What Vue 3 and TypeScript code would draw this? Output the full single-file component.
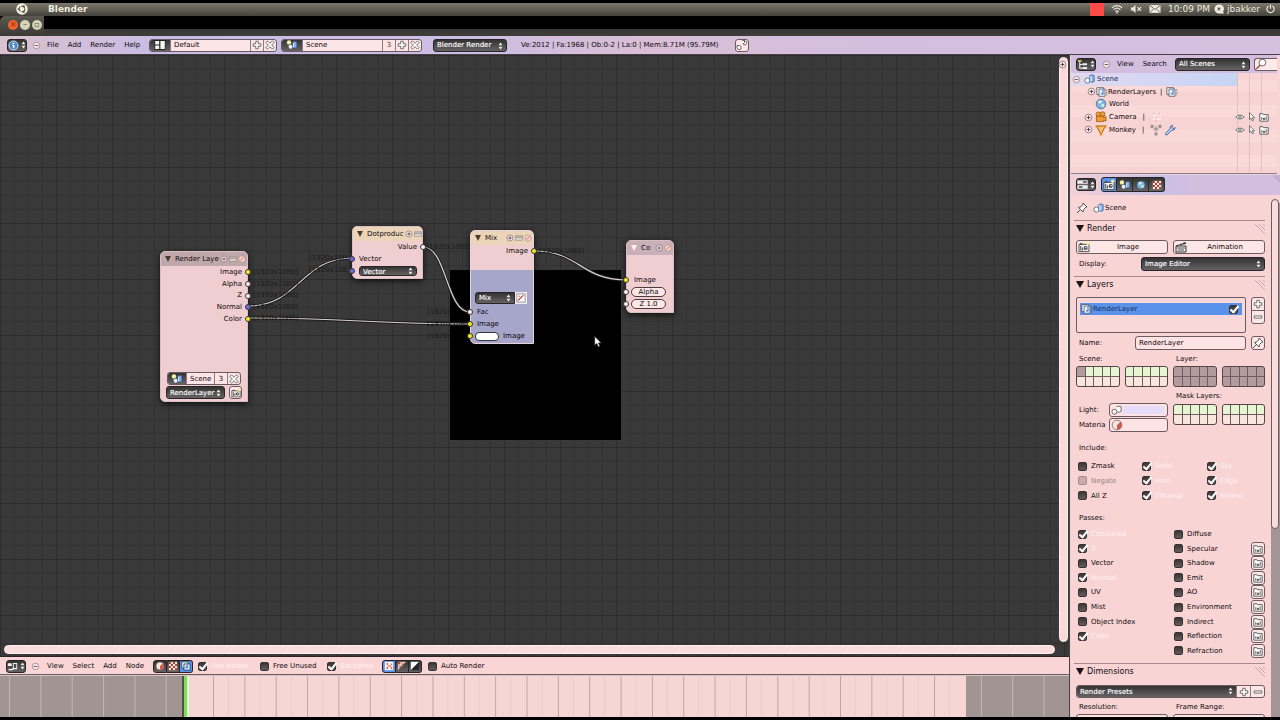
<script setup lang="ts">
import { ref } from 'vue'

interface Row { label: string; on: boolean; dim?: boolean; render?: boolean }

const fileMenus = ['File', 'Add', 'Render', 'Help']
const nodeMenus = ['View', 'Select', 'Add', 'Node']

const layoutName = ref('Default')
const sceneName = ref('Scene')
const layerName = ref('RenderLayer')
const search = ref('')

const outputs = [
  { label: 'Image', color: 'yellow' },
  { label: 'Alpha', color: 'white' },
  { label: 'Z', color: 'white' },
  { label: 'Normal', color: 'blue' },
  { label: 'Color', color: 'yellow' },
]

const place = (x: number, y: number) => ({ left: `${x}px`, top: `${y}px` })

const sizeTags = [
  { x: 253, y: 213, t: '[1920x1080]' },
  { x: 253, y: 225, t: '[1920x1080]' },
  { x: 253, y: 236, t: '[1920x1080]' },
  { x: 253, y: 248, t: '[1920x1080]' },
  { x: 253, y: 259, t: '[1920x1080]' },
  { x: 309, y: 199, t: '[1920x108' },
  { x: 309, y: 211, t: '[1920x108' },
  { x: 426, y: 188, t: '[1920x1080' },
  { x: 427, y: 253, t: '[1920x' },
  { x: 427, y: 265, t: '[1920x108' },
  { x: 427, y: 277, t: '[1920x' },
  { x: 539, y: 192, t: '[1920x1080]' },
]

const tree = [
  { icon: 'layers', label: 'RenderLayers', extra: ['layers'], open: true, pick: false, deep: true },
  { icon: 'world', label: 'World', extra: [], open: false, pick: false, deep: false },
  { icon: 'camobj', label: 'Camera', extra: ['dots'], open: true, pick: true, deep: false },
  { icon: 'mesh', label: 'Monkey', extra: ['verts', 'wrench'], open: true, pick: true, deep: false },
]

const include = ref<Row[]>([
  { label: 'Zmask', on: false }, { label: 'Solid', on: true }, { label: 'Sky', on: true },
  { label: 'Negate', on: false, dim: true }, { label: 'Halo', on: true }, { label: 'Edge', on: true },
  { label: 'All Z', on: false }, { label: 'ZTransp', on: true }, { label: 'Strand', on: true },
])
const passes = ref<Row[]>([
  { label: 'Combined', on: true }, { label: 'Z', on: true }, { label: 'Vector', on: false },
  { label: 'Normal', on: true }, { label: 'UV', on: false }, { label: 'Mist', on: false },
  { label: 'Object Index', on: false }, { label: 'Color', on: true },
])
const passesRight = ref<Row[]>([
  { label: 'Diffuse', on: false }, { label: 'Specular', on: false, render: true },
  { label: 'Shadow', on: false, render: true }, { label: 'Emit', on: false, render: true },
  { label: 'AO', on: false, render: true }, { label: 'Environment', on: false, render: true },
  { label: 'Indirect', on: false, render: true }, { label: 'Reflection', on: false, render: true },
  { label: 'Refraction', on: false, render: true },
])
const nodeChecks = ref({ use: true, free: false, backdrop: true, auto: false })

const ticks = Array.from({ length: 34 }, (_, i) => 9.5 + i * 31.35)
const halfTicks = Array.from({ length: 24 }, (_, i) => 213.5 + i * 31.35)
</script>

<template>
  <div class="app">
    <svg class="defs" aria-hidden="true">
      <symbol id="i-arrows" viewBox="0 0 6 10"><path d="M3 0.5 5.4 4H.6zM3 9.5 5.4 6H.6z" fill="#f2f2f2" /></symbol>
      <symbol id="i-plus" viewBox="0 0 12 12"><path d="M4.5 1.5h3v3h3v3h-3v3h-3v-3h-3v-3h3z" fill="#fff" stroke="#555" stroke-width="1" /></symbol>
      <symbol id="i-minus" viewBox="0 0 12 12"><path d="M1.5 4.7h9v2.6h-9z" fill="#fff" stroke="#555" stroke-width="1" /></symbol>
      <symbol id="i-x" viewBox="0 0 12 12"><path d="M3 1 6 4l3-3 2 2-3 3 3 3-2 2-3-3-3 3-2-2 3-3-3-3z" fill="#fff" stroke="#555" stroke-width="1" /></symbol>
      <symbol id="i-collapse" viewBox="0 0 10 10"><circle cx="5" cy="5" r="3.6" fill="#fbe4e8" stroke="#96848d" stroke-width=".9" /><path d="M3 5h4" stroke="#555" /></symbol>
      <symbol id="i-expand" viewBox="0 0 10 10"><circle cx="5" cy="5" r="3.8" fill="#fbe4e8" stroke="#87767a" stroke-width=".9" /><path d="M3 5h4M5 3v4" stroke="#443c3e" stroke-width="1" /></symbol>
      <symbol id="i-info" viewBox="0 0 12 12"><circle cx="6" cy="6" r="5" fill="#4f86c8" stroke="#d9e6f5" stroke-width="1" /><path d="M5 3h2v1.4H5zM4.6 5.3H7V9H5.3V6.4h-.7z" fill="#fff" /></symbol>
      <symbol id="i-layout" viewBox="0 0 12 12"><path d="M.5 1h11v10H.5z" fill="#222" /><path d="M1.2 2h4v3.5h-4zM1.2 6.5h4V10h-4zM6.4 2h4.4v8H6.4z" fill="#f7f7f2" /></symbol>
      <symbol id="i-scene" viewBox="0 0 14 12"><circle cx="3.5" cy="3" r="2.6" fill="#f5f3a8" /><circle cx="5.4" cy="8" r="2.9" fill="#e4ecf2" stroke="#333" stroke-width=".7" /><path d="M8 2.6q2.4-1.4 4.6 0v6.2q-2.2 1.6-4.6 0z" fill="#7fb0ee" stroke="#35578c" stroke-width=".8" /><path d="M8.8 3.5v5.2" stroke="#e8f4ff" /></symbol>
      <symbol id="i-scenelt" viewBox="0 0 14 12"><circle cx="4" cy="7.8" r="3" fill="#fff" stroke="#456" stroke-width=".9" /><path d="M6.8 2q2.6-1.4 5 0v7q-2.4 1.7-5 0z" fill="#8bb8ee" stroke="#3c5f94" stroke-width=".9" /><path d="M8 2.8v6" stroke="#eef7ff" stroke-width="1.2" /></symbol>
      <symbol id="i-lamp" viewBox="0 0 14 12"><circle cx="4" cy="8" r="2.9" fill="#fff" stroke="#444" stroke-width=".9" /><path d="M6.4 2.2q2.8-1.2 5.4 0v5.4q-1.6 1.6-4.6.6" fill="#fff" stroke="#444" stroke-width=".9" /></symbol>
      <symbol id="i-full" viewBox="0 0 12 12"><path d="M6.200 1.500h2.300v2L7 5M8.500 1.500 11 3.500 9.500 6 7 5M1 6.500h2.500L5 7.500v2.500l-2 1L1 9z" fill="#fff" stroke="#444" stroke-width=".8" /></symbol>
      <symbol id="i-tree" viewBox="0 0 12 12"><path d="M3 2v8h3M3 6h3" fill="none" stroke="#fff" stroke-width="1" /><path d="M1 1h4v2H1z" fill="#c9bd6a" /><path d="M6 4.7h5v2.2H6zM6 8.7h5v2.2H6z" fill="#eee" /></symbol>
      <symbol id="i-props" viewBox="0 0 12 12"><path d="M.5 1.5h11v3.6H.5zM.5 6.9h11v3.6H.5z" fill="#f1eeee" stroke="#ddd" stroke-width=".6" /><path d="M6.5 2.5h4v1.6h-4zM2 8h4v1.5H2z" fill="#444" /></symbol>
      <symbol id="i-nodes" viewBox="0 0 14 12"><path d="M1 2h5v3.500H1zM7.500 1.500h5.500V9.500H7.500z" fill="#f1f1f1" /><path d="M2 10h4.500q1.500 0 1.500-2" fill="none" stroke="#fff" stroke-width="1.4" /><path d="M8.600 2.800h3.200v5H8.600z" fill="#4a4a4a" /></symbol>
      <symbol id="i-camera" viewBox="0 0 12 12"><path d="M1 3.4h10v7.200H1z" fill="#f8f4f4" stroke="#444" stroke-width=".9" /><path d="M2 2.200h2.500v1.400H2z" fill="#444" /><path d="M2.800 5v4.600M4.600 6.500v3.100" stroke="#444" stroke-width="1" /><circle cx="7.700" cy="7" r="2" fill="#444" /><circle cx="8" cy="6.800" r=".8" fill="#fff" /><circle cx="9.700" cy="2.200" r="1.700" fill="#f5ee92" /></symbol>
      <symbol id="i-result" viewBox="0 0 12 12"><path d="M1 2h3.500l.8 1.200H11v7.800H1z" fill="#fff" stroke="#444" stroke-width="1" /><path d="M3.400 9.400V6.200M5.400 9.400V7.400h1.2v2M8.600 9.400V5.200" fill="none" stroke="#444" stroke-width="1.1" /></symbol>
      <symbol id="i-clap" viewBox="0 0 12 12"><path d="M1 5h10v6H1z" fill="#eee" stroke="#222" stroke-width=".9" /><path d="M1 4.5 10.4 1l.7 1.8L1.6 5.6z" fill="#333" /><path d="m3.4 3.6 1.4.8M6.4 2.4l1.4.9" stroke="#fff" stroke-width=".9" /><path d="M2 7h8M3 9h6" stroke="#444" stroke-width=".9" /></symbol>
      <symbol id="i-layers" viewBox="0 0 14 12"><path d="M1 1h8v8H1z" fill="#fff" stroke="#445" stroke-width=".9" /><path d="M3.500 2.600h7v8.400h-7z" fill="#e9f2fb" stroke="#456" stroke-width=".9" /><path d="M8.200 3.800v4.400H5.800" fill="none" stroke="#3c78c4" stroke-width="1.3" /><path d="M12.600 3v7" stroke="#555" stroke-width=".8" stroke-dasharray="2 1" /></symbol>
      <symbol id="i-world" viewBox="0 0 12 12"><circle cx="6" cy="6" r="4.8" fill="#7fb4e4" stroke="#3c6690" stroke-width=".8" /><path d="M3 3.4q2.6-2 4 .2-1 2.400-3 2zM6.400 6.200q3-1 3 1.200-1.400 2.600-2.600 1.600z" fill="#dff3d8" /></symbol>
      <symbol id="i-tex" viewBox="0 0 12 12"><path d="M1 1h10v10H1z" fill="#fbe6e0" /><path d="M1 1h2.5v2.5H1zM6 1h2.5v2.5H6zM3.5 3.5H6V6H3.5zM8.5 3.5H11V6H8.500zM1 6h2.500v2.500H1zM6 6h2.500v2.500H6zM3.500 8.500H6V11H3.500zM8.500 8.500H11V11H8.500z" fill="#a8463c" /></symbol>
      <symbol id="i-mat" viewBox="0 0 12 12"><circle cx="6" cy="6" r="4.800" fill="#f9e9e4" stroke="#7a4a44" stroke-width=".7" /><path d="M6 6 9.600 2.800A4.600 4.600 0 0 1 6 10.600zM6 6 2.200 3.600" fill="#cf5a4c" /></symbol>
      <symbol id="i-camobj" viewBox="0 0 12 12"><circle cx="3.400" cy="3.400" r="2.400" fill="#f0a040" stroke="#8a4e10" stroke-width=".7" /><circle cx="7.600" cy="3.200" r="2.400" fill="#f0a040" stroke="#8a4e10" stroke-width=".7" /><path d="M1.400 5.200h7.200v1.400l2.400-1v4.600l-2.400-1v1.400H1.400z" fill="#f39b2e" stroke="#8a4e10" stroke-width=".7" /></symbol>
      <symbol id="i-mesh" viewBox="0 0 12 12"><path d="M1.600 2h8.800L6 10.600z" fill="#f8c064" stroke="#a85e12" stroke-width="1" /><circle cx="1.800" cy="2.200" r="1.300" fill="#e88a20" /><circle cx="10.200" cy="2.200" r="1.300" fill="#e88a20" /><circle cx="6" cy="10.200" r="1.300" fill="#e88a20" /></symbol>
      <symbol id="i-verts" viewBox="0 0 12 12"><path d="M2 2.400h8L6 10z" fill="none" stroke="#bba" stroke-width=".6" /><path d="M1 1.400h2v2H1zM9 1.400h2v2H9zM5 9h2v2H5zM5 4h2v2H5z" fill="#fff" stroke="#555" stroke-width=".7" /></symbol>
      <symbol id="i-wrench" viewBox="0 0 12 12"><path d="M1.400 9.400 6 4.800Q5.600 2 8.400 1.200L7.800 3.400l1.400 1.200 2-1Q11 6.600 7.600 6.400L3 11Q1 11.200 1.400 9.400z" fill="#b9d2f2" stroke="#3c5c94" stroke-width=".9" /></symbol>
      <symbol id="i-dots" viewBox="0 0 12 12"><path d="M3 3v6M6 8.500h3M9 3v6" stroke="#fff" stroke-width="1" stroke-dasharray="2 2" fill="none" /><path d="M2 2.500h1M8 2.500h1M5 10h1" stroke="#c99" /></symbol>
      <symbol id="i-eye" viewBox="0 0 12 12"><path d="M.8 6Q6 1.200 11.200 6 6 10.800.8 6z" fill="#fff" stroke="#555" stroke-width=".9" /><circle cx="6" cy="6" r="1.700" fill="#ccc" stroke="#555" stroke-width=".7" /></symbol>
      <symbol id="i-cursor" viewBox="0 0 12 16"><path d="M2 1v11l2.600-2.200L6.400 14l2-.9-1.800-3.900H10z" fill="#fff" stroke="#222" stroke-width=".9" /></symbol>
      <symbol id="i-pin" viewBox="0 0 12 12"><path d="m7 1 4 4-1.500.5-2 2L7 10 2.500 5.500 5 4.700l1.700-1.900zM4.400 7.600 1 11" fill="#fff" stroke="#444" stroke-width=".9" /></symbol>
      <symbol id="i-search" viewBox="0 0 12 12"><circle cx="7.400" cy="4.600" r="3.400" fill="#fff" stroke="#655" stroke-width=".9" /><path d="M5 7.200 1.200 11" stroke="#a5563c" stroke-width="1.600" /></symbol>
      <symbol id="i-ball" viewBox="0 0 12 12"><circle cx="6" cy="6" r="5" fill="#f5cfc8" stroke="#987" stroke-width=".8" /><path d="m3.500 8.500 5-5" stroke="#d9736a" stroke-width="1.500" /></symbol>
      <symbol id="i-card" viewBox="0 0 12 10"><path d="M.6 1.500h10.800v7H.6z" fill="#ddd5cf" stroke="#877" stroke-width=".8" /><path d="M1 3.800h10" stroke="#554" stroke-width=".9" /></symbol>
      <symbol id="i-bd1" viewBox="0 0 12 12"><path d="M1 1h10v10H1z" fill="#fff" /><path d="M3 2v3h2V2zM3 7v3h2V7zM5 5h3v2H5zM8 3h2v2H8zM8 7h2v3H8z" fill="#df6a58" /></symbol>
      <symbol id="i-bd2" viewBox="0 0 12 12"><path d="M1 1h10L1 11z" fill="#e8c5bb" /><path d="M1 1h3v3H1zM6 3h2v2H6zM3 6h2v2H3z" fill="#a85b4b" /></symbol>
      <symbol id="i-bd3" viewBox="0 0 12 12"><path d="M1 1h10L1 11z" fill="#fff" /><path d="M11 1v10H1z" fill="#292929" /></symbol>
      <symbol id="i-comp" viewBox="0 0 12 12"><path d="M1 1h7.500v7.500H1z" fill="#fff" stroke="#245" /><path d="M3.500 3.500H11V11H3.500z" fill="#cfe2ff" stroke="#245" /><path d="M7.500 4.500v3.500H5.500" fill="none" stroke="#2b62b8" stroke-width="1.200" /></symbol>
      <symbol id="i-grip" viewBox="0 0 10 10"><path d="M0 0 10 10M4 0l6 6M8 0l2 2" stroke="#8d7580" stroke-width=".8" /></symbol>
      <symbol id="i-swatch" viewBox="0 0 12 12"><path d="M1 1h10v10H1z" fill="#fff" stroke="#556" stroke-width=".7" /><path d="M2.500 9 9 2.500" stroke="#c44" stroke-width="1.500" /><path d="M3 3h2v2H3z" fill="#d88" /></symbol>
      <symbol id="i-ubuntu" viewBox="0 0 14 14"><circle cx="7" cy="7" r="6.800" fill="#f3efdf" /><circle cx="7" cy="7" r="3.300" fill="none" stroke="#55524a" stroke-width="1.200" stroke-dasharray="5.900 1" /><circle cx="2.800" cy="7" r="1" fill="#55524a" /><circle cx="9.200" cy="3.300" r="1" fill="#55524a" /><circle cx="9.200" cy="10.700" r="1" fill="#55524a" /></symbol>
      <symbol id="i-wifi" viewBox="0 0 14 11"><path d="M1 4.200q6-5.400 12 0M3 6.400q4-3.600 8 0M5 8.400q2-1.700 4 0" fill="none" stroke="#e8e4d8" stroke-width="1.400" /><circle cx="7" cy="9.900" r="1" fill="#e8e4d8" /></symbol>
      <symbol id="i-mute" viewBox="0 0 13 10"><path d="M1 3.300h2L6 .8v8.400L3 6.700H1z" fill="#e8e4d8" /><path d="m8 3 4 4m0-4L8 7" stroke="#e8e4d8" stroke-width="1.300" /></symbol>
      <symbol id="i-mail" viewBox="0 0 13 10"><path d="M.5.800h12v8.400H.5z" fill="#efebe0" /><path d="m.8 1.200 5.700 4.300 5.700-4.300M.8 9l4.200-4M12.200 9 8 5" fill="none" stroke="#55524a" stroke-width=".9" /></symbol>
      <symbol id="i-user" viewBox="0 0 12 11"><path d="M5.500.5a5 5 0 1 0 0 10H11l-1-2A5 5 0 0 0 5.500.5z" fill="#efebe0" /><path d="m4 4 3 3m0-3L4 7" stroke="#55524a" stroke-width="1.300" /></symbol>
      <symbol id="i-power" viewBox="0 0 11 11"><path d="M3.300 2.200a4 4 0 1 0 4.400 0M5.500.5v4.800" fill="none" stroke="#e8e4d8" stroke-width="1.300" /></symbol>
    </svg>

    <header class="panel">
      <svg class="ubuntu"><use href="#i-ubuntu" /></svg>
      <strong class="apptitle">Blender</strong>
      <div class="tray">
        <span class="rec"></span>
        <svg class="t13"><use href="#i-wifi" /></svg>
        <svg class="t13"><use href="#i-mute" /></svg>
        <svg class="t13"><use href="#i-mail" /></svg>
        <span class="clock">10:09 PM</span>
        <span class="user"><svg class="t12"><use href="#i-user" /></svg>jbakker</span>
        <svg class="t12"><use href="#i-power" /></svg>
      </div>
    </header>
    <div class="titlebar">
      <div class="wbtns">
        <button class="wb close" aria-label="Close">×</button>
        <button class="wb" aria-label="Minimize">–</button>
        <button class="wb" aria-label="Maximize">▫</button>
      </div>
    </div>

    <div class="infobar">
      <button class="dark type" aria-label="Editor type"><svg class="i12"><use href="#i-info" /></svg><svg class="arr"><use href="#i-arrows" /></svg></button>
      <button class="bare coll" aria-label="Collapse menus"><svg class="i8"><use href="#i-collapse" /></svg></button>
      <nav class="menus filemenus"><button v-for="m in fileMenus" :key="m" class="bare">{{ m }}</button></nav>
      <div class="idblock layoutid">
        <button class="dark idicon" aria-label="Screen layout"><svg class="i12"><use href="#i-layout" /></svg></button>
        <input v-model="layoutName" aria-label="Screen layout name" />
        <button aria-label="Add layout"><svg class="i10"><use href="#i-plus" /></svg></button>
        <button aria-label="Delete layout"><svg class="i10"><use href="#i-x" /></svg></button>
      </div>
      <div class="idblock sceneid">
        <button class="dark idicon" aria-label="Scene"><svg class="i12"><use href="#i-scene" /></svg></button>
        <input v-model="sceneName" aria-label="Scene name" />
        <button class="count">3</button>
        <button aria-label="Add scene"><svg class="i10"><use href="#i-plus" /></svg></button>
        <button aria-label="Delete scene"><svg class="i10"><use href="#i-x" /></svg></button>
      </div>
      <label class="menu engine"><select aria-label="Render engine"><option>Blender Render</option></select><svg class="arr"><use href="#i-arrows" /></svg></label>
      <span class="stats">Ve:2012 | Fa:1968 | Ob:0-2 | La:0 | Mem:8.71M (95.79M)</span>
      <button class="light full" aria-label="Full screen"><svg class="i12"><use href="#i-full" /></svg></button>
    </div>

    <div class="main">
      <section class="left">
        <div class="canvas">
          <div class="backdrop" :style="place(450, 215)"></div>
          <svg class="links" aria-hidden="true">
            <g transform="translate(0 -55)" fill="none">
              <g stroke="#1b1b1b" stroke-width="3">
                <path d="M248 306C300 306 300 258 353 258" /><path d="M248 318C350 318 370 324 470 324" />
                <path d="M423 247C447 247 446 312 470 312" /><path d="M534 251C580 251 580 280 627 280" />
              </g>
              <g stroke="#d8d0d0" stroke-width="1.200">
                <path d="M248 306C300 306 300 258 353 258" /><path d="M248 318C350 318 370 324 470 324" />
                <path d="M423 247C447 247 446 312 470 312" /><path d="M534 251C580 251 580 280 627 280" />
              </g>
            </g>
          </svg>
          <span v-for="(s, i) in sizeTags" :key="i" class="sizetag" :style="place(s.x, s.y)">{{ s.t }}</span>

          <article class="node rl" :style="place(160, 196)">
            <div class="nhead grey"><i class="tri"></i><span>Render Laye</span><svg class="i8"><use href="#i-expand" /></svg><svg class="i8"><use href="#i-card" /></svg><svg class="i8"><use href="#i-ball" /></svg></div>
            <div class="outs">
              <div v-for="o in outputs" :key="o.label" class="nrow out"><span>{{ o.label }}</span><i class="sock r" :class="o.color"></i></div>
            </div>
            <div class="grow"></div>
            <div class="idblock nid">
              <button class="dark idicon" aria-label="Scene"><svg class="i12"><use href="#i-scene" /></svg></button>
              <input value="Scene" aria-label="Node scene" />
              <button class="count">3</button>
              <button aria-label="Unlink scene"><svg class="i10"><use href="#i-x" /></svg></button>
            </div>
            <div class="nlayer">
              <label class="menu"><select aria-label="Node layer"><option>RenderLayer</option></select><svg class="arr"><use href="#i-arrows" /></svg></label>
              <button class="light" aria-label="Render layer"><svg class="i10"><use href="#i-camera" /></svg></button>
            </div>
          </article>

          <article class="node dot" :style="place(352, 171)">
            <div class="nhead tan"><i class="tri"></i><span>Dotproduc</span><svg class="i8"><use href="#i-expand" /></svg><svg class="i8"><use href="#i-card" /></svg></div>
            <div class="nrow out"><span>Value</span><i class="sock r white"></i></div>
            <div class="nrow in"><i class="sock l blue"></i><span>Vector</span></div>
            <div class="nrow"><i class="sock l blue"></i><label class="menu vec"><select aria-label="Vector"><option>Vector</option></select><svg class="arr"><use href="#i-arrows" /></svg></label></div>
          </article>

          <article class="node mix" :style="place(470, 175)">
            <div class="nhead tan"><i class="tri"></i><span>Mix</span><svg class="i8"><use href="#i-expand" /></svg><svg class="i8"><use href="#i-card" /></svg><svg class="i8"><use href="#i-ball" /></svg></div>
            <div class="nrow out"><span>Image</span><i class="sock r yellow"></i></div>
            <div class="grow"></div>
            <div class="mixrow">
              <label class="menu"><select aria-label="Blend mode"><option>Mix</option></select><svg class="arr"><use href="#i-arrows" /></svg></label>
              <button class="swbtn" aria-label="Use alpha"><svg class="i10"><use href="#i-swatch" /></svg></button>
            </div>
            <div class="nrow in"><i class="sock l white"></i><span>Fac</span></div>
            <div class="nrow in"><i class="sock l yellow"></i><span>Image</span></div>
            <div class="nrow in"><i class="sock l yellow"></i><button class="colour" aria-label="Second image colour"></button><span>Image</span></div>
          </article>

          <article class="node comp" :style="place(626, 185)">
            <div class="nhead mauve"><i class="tri pale"></i><span>Co</span><svg class="i8"><use href="#i-expand" /></svg><svg class="i8"><use href="#i-ball" /></svg></div>
            <div class="grow"></div>
            <div class="nrow in"><i class="sock l yellow"></i><span>Image</span></div>
            <div class="nrow"><i class="sock l white"></i><button class="pill">Alpha</button></div>
            <div class="nrow"><i class="sock l white"></i><button class="pill">Z 1.0</button></div>
          </article>

          <svg class="pointer" :style="place(593, 280)" aria-hidden="true"><use href="#i-cursor" /></svg>
          <div class="vscroll"><svg class="i8"><use href="#i-expand" /></svg></div>
          <div class="hscroll"></div>
        </div>

        <div class="nodebar">
          <button class="dark type" aria-label="Editor type"><svg class="i12"><use href="#i-nodes" /></svg><svg class="arr"><use href="#i-arrows" /></svg></button>
          <button class="bare coll" aria-label="Collapse menus"><svg class="i8"><use href="#i-collapse" /></svg></button>
          <nav class="menus nodemenus"><button v-for="m in nodeMenus" :key="m" class="bare">{{ m }}</button></nav>
          <div class="seg">
            <button aria-label="Material nodes"><svg class="i10"><use href="#i-mat" /></svg></button>
            <button aria-label="Texture nodes"><svg class="i10"><use href="#i-tex" /></svg></button>
            <button class="on" aria-label="Compositing nodes"><svg class="i12"><use href="#i-comp" /></svg></button>
          </div>
          <label class="chk c1"><input v-model="nodeChecks.use" type="checkbox" /><span>Use Nodes</span></label>
          <label class="chk c2"><input v-model="nodeChecks.free" type="checkbox" /><span>Free Unused</span></label>
          <label class="chk c3"><input v-model="nodeChecks.backdrop" type="checkbox" /><span>Backdrop</span></label>
          <div class="seg">
            <button class="on" aria-label="Color and alpha"><svg class="i10"><use href="#i-bd1" /></svg></button>
            <button aria-label="Color"><svg class="i10"><use href="#i-bd2" /></svg></button>
            <button aria-label="Alpha"><svg class="i10"><use href="#i-bd3" /></svg></button>
          </div>
          <label class="chk c4"><input v-model="nodeChecks.auto" type="checkbox" /><span>Auto Render</span></label>
        </div>

        <svg class="timeline" viewBox="0 0 1069 42" preserveAspectRatio="none" aria-label="Timeline">
          <rect width="1069" height="42" fill="#a19594" />
          <path v-for="t in ticks" :key="t" :d="`M${t} 0V42`" stroke="#c2b7b6" />
          <rect x="188" width="778" height="42" fill="#f8d5d5" />
          <path v-for="t in halfTicks" :key="t" :d="`M${t} 0V42`" stroke="#c3a5a7" />
          <path v-for="t in halfTicks" :key="`s${t}`" :d="`M${t + 15} 0V42`" stroke="#eccccd" />
          <rect x="182" width="2" height="42" fill="#55514f" />
          <rect x="184" width="3" height="42" fill="#7be04c" />
          <rect x="187" width="2" height="42" fill="#d5fbe4" />
          <path d="M0 .5H1069" stroke="#d8c5c5" />
        </svg>
      </section>

      <aside class="right">
        <section class="outliner">
          <div class="ohead">
            <button class="dark type" aria-label="Editor type"><svg class="i12"><use href="#i-tree" /></svg><svg class="arr"><use href="#i-arrows" /></svg></button>
            <button class="bare coll" aria-label="Collapse menus"><svg class="i8"><use href="#i-collapse" /></svg></button>
            <nav class="menus omenus"><button class="bare">View</button><button class="bare">Search</button></nav>
            <label class="menu scenes"><select aria-label="Display mode"><option>All Scenes</option></select><svg class="arr"><use href="#i-arrows" /></svg></label>
            <label class="search"><svg class="i12"><use href="#i-search" /></svg><input v-model="search" aria-label="Search outliner" /></label>
          </div>
          <ul class="tree">
            <li class="root"><svg class="i8"><use href="#i-collapse" /></svg><svg class="i12"><use href="#i-scenelt" /></svg><span>Scene</span></li>
            <li v-for="r in tree" :key="r.label" class="kid" :class="{ deep: r.deep }">
              <svg class="i8" :class="{ hid: !r.open }"><use href="#i-expand" /></svg>
              <svg class="i12"><use :href="`#i-${r.icon}`" /></svg>
              <span>{{ r.label }}</span>
              <template v-if="r.extra.length"><span class="bar">|</span><svg v-for="e in r.extra" :key="e" class="i12"><use :href="`#i-${e}`" /></svg></template>
              <span v-if="r.pick" class="flags"><svg class="i10"><use href="#i-eye" /></svg><svg class="i10"><use href="#i-cursor" /></svg><svg class="i10"><use href="#i-result" /></svg></span>
            </li>
          </ul>
        </section>

        <section class="props">
          <div class="phead">
            <button class="dark type" aria-label="Editor type"><svg class="i12"><use href="#i-props" /></svg><svg class="arr"><use href="#i-arrows" /></svg></button>
            <div class="seg tabs">
              <button class="on" aria-label="Render"><svg class="i12"><use href="#i-camera" /></svg></button>
              <button aria-label="Scene"><svg class="i12"><use href="#i-scene" /></svg></button>
              <button aria-label="World"><svg class="i10"><use href="#i-world" /></svg></button>
              <button aria-label="Texture"><svg class="i10"><use href="#i-tex" /></svg></button>
            </div>
            <svg class="grip"><use href="#i-grip" /></svg>
          </div>
          <div class="pbody">
            <div class="pcontent">
              <div class="crumb"><svg class="i12"><use href="#i-pin" /></svg><svg class="i12"><use href="#i-scenelt" /></svg><span>Scene</span></div>

              <section class="sect">
                <h2><i class="tri"></i>Render<svg class="grip"><use href="#i-grip" /></svg></h2>
                <div class="two">
                  <button class="light wide"><svg class="i12"><use href="#i-camera" /></svg><span>Image</span></button>
                  <button class="light wide"><svg class="i12"><use href="#i-clap" /></svg><span>Animation</span></button>
                </div>
                <div class="disp"><label for="disp">Display:</label>
                  <div class="menu"><select id="disp"><option>Image Editor</option></select><svg class="arr"><use href="#i-arrows" /></svg></div>
                </div>
              </section>

              <section class="sect layers">
                <h2><i class="tri"></i>Layers<svg class="grip"><use href="#i-grip" /></svg></h2>
                <div class="listrow">
                  <div class="list">
                    <div class="item"><svg class="i12"><use href="#i-layers" /></svg><span>RenderLayer</span><input type="checkbox" checked aria-label="Enable RenderLayer" /></div>
                  </div>
                  <div class="stack"><button aria-label="Add layer"><svg class="i10"><use href="#i-plus" /></svg></button><button aria-label="Remove layer"><svg class="i10"><use href="#i-minus" /></svg></button></div>
                </div>
                <div class="namerow"><label for="lname">Name:</label><input id="lname" v-model="layerName" class="field" /><button class="light" aria-label="Single layer"><svg class="i12"><use href="#i-pin" /></svg></button></div>
                <div class="masks">
                  <div>
                    <p class="lab">Scene:</p>
                    <div class="grids"><div v-for="g in 2" :key="g" class="lgrid mint"><i v-for="c in 10" :key="c" :class="{ sel: g === 1 && c === 1 }"></i></div></div>
                    <div class="pick light1"><label for="light">Light:</label><div class="picker"><svg class="i12"><use href="#i-lamp" /></svg><input id="light" class="lav" /></div></div>
                    <div class="pick"><label for="mater">Materia</label><div class="picker"><svg class="i12"><use href="#i-mat" /></svg><input id="mater" /></div></div>
                  </div>
                  <div>
                    <p class="lab">Layer:</p>
                    <div class="grids"><div v-for="g in 2" :key="g" class="lgrid dark2"><i v-for="c in 10" :key="c"></i></div></div>
                    <p class="lab mask">Mask Layers:</p>
                    <div class="grids"><div v-for="g in 2" :key="g" class="lgrid mint"><i v-for="c in 10" :key="c"></i></div></div>
                  </div>
                </div>
                <p class="lab inc">Include:</p>
                <div class="include">
                  <label v-for="r in include" :key="r.label" class="chk" :class="{ dim: r.dim }"><input v-model="r.on" type="checkbox" :disabled="r.dim" /><span>{{ r.label }}</span></label>
                </div>
                <p class="lab pas">Passes:</p>
                <div class="passes">
                  <div class="pcol"><label v-for="r in passes" :key="r.label" class="chk"><input v-model="r.on" type="checkbox" /><span>{{ r.label }}</span></label></div>
                  <div class="pcol">
                    <div v-for="r in passesRight" :key="r.label" class="prow">
                      <label class="chk"><input v-model="r.on" type="checkbox" /><span>{{ r.label }}</span></label>
                      <button v-if="r.render" class="light" :aria-label="`Exclude ${r.label}`"><svg class="i10"><use href="#i-result" /></svg></button>
                    </div>
                  </div>
                </div>
              </section>

              <section class="sect">
                <h2><i class="tri"></i>Dimensions<svg class="grip"><use href="#i-grip" /></svg></h2>
                <div class="preset">
                  <label class="menu"><select aria-label="Render presets"><option>Render Presets</option></select><svg class="arr"><use href="#i-arrows" /></svg></label>
                  <button aria-label="Add preset"><svg class="i10"><use href="#i-plus" /></svg></button>
                  <button aria-label="Remove preset"><svg class="i10"><use href="#i-minus" /></svg></button>
                </div>
                <div class="two dims"><p class="lab">Resolution:</p><p class="lab">Frame Range:</p><div class="field"></div><div class="field"></div></div>
              </section>
            </div>
            <div class="pscroll"><div class="thumb"></div></div>
          </div>
        </section>
      </aside>
    </div>
  </div>
</template>

<style>
html, body { margin: 0; background: #000; }
</style>

<style scoped>
* { box-sizing: border-box; }
.app { height: 100vh; min-height: 400px; display: flex; flex-direction: column; overflow: hidden; padding: 3px 0; background: #000; color: #0e080a; font: 7px/10px "DejaVu Sans", sans-serif; }
button, input, select { font: inherit; color: inherit; margin: 0; padding: 0; border: 0; border-radius: 0; background: none; min-width: 0; outline: 0; }
button { display: flex; align-items: center; justify-content: center; cursor: default; }
svg { display: block; flex: none; }
p, ul, h2 { margin: 0; padding: 0; list-style: none; font-weight: normal; }
.defs { position: absolute; width: 0; height: 0; }
.i8 { width: 9px; height: 9px; }
.i10 { width: 10px; height: 10px; }
.i12 { width: 12px; height: 12px; }
.arr { width: 5px; height: 8px; }
.grow { flex: 1; }
.hid { visibility: hidden; }

.panel { flex: none; height: 13px; display: flex; align-items: center; padding: 0 4px 1px 15px; background: linear-gradient(#7b786c, #44433d); color: #eeeadf; overflow: hidden; }
.ubuntu { width: 14px; height: 12px; }
.apptitle { margin-left: 19px; font: bold 9px/12px "DejaVu Sans", sans-serif; }
.tray { margin-left: auto; display: flex; align-items: center; gap: 7px; font: 9px/12px "DejaVu Sans", sans-serif; }
.rec { width: 14px; height: 13px; background: #fa4b48; }
.t13 { width: 12px; height: 10px; }
.t12 { width: 11px; height: 10px; }
.clock { margin-right: -3px; }
.user { display: flex; align-items: center; gap: 2px; margin-right: -2px; }

.titlebar { flex: none; height: 20px; padding-bottom: 7px; background: linear-gradient(#000 13px, #383733 13px, #3e3d39); }
.wbtns { width: 44px; height: 20px; display: flex; align-items: center; gap: 2px; padding: 0 0 2px 8px; border-radius: 5px 0 0 0; background: linear-gradient(#5b5a50, #3a3935); }
.wb { width: 10px; height: 10px; border-radius: 50%; background: #d5d2b8; color: #66644f; font-size: 8px; line-height: 8px; }
.wb.close { background: #f0622c; color: #8c2c0c; }

.infobar { flex: none; height: 19px; display: flex; align-items: center; padding: 0 7px; border-bottom: 1px solid #4a4048; background: linear-gradient(90deg, #d9c2d0, #c9bce4 12%, #cbbde4 36%, #d9bfd6 50%, #d3bee0 70%, #d5c0e0); }
.dark, .menu, .seg button { border: 1px solid #292425; border-radius: 3px; background: linear-gradient(#343333, #656363); color: #fff; }
.type { width: 20px; height: 13px; gap: 2px; }
.type .i12 { width: 11px; height: 11px; }
.coll { width: 10px; margin-left: 4px; }
.menus { display: flex; }
.filemenus { gap: 9px; margin-left: 6px; width: 102px; }
.idblock { display: flex; height: 13px; border: 1px solid #685a60; border-radius: 3px; background: #fde4e6; }
.idblock > * + * { border-left: 1px solid #8d7a80; }
.idblock .dark { width: 20px; border: 0; border-radius: 2px 0 0 2px; }
.idblock input { flex: 1; padding-left: 3px; }
.idblock button:not(.dark) { width: 13px; }
.layoutid { width: 128px; }
.sceneid { width: 141px; margin-left: 4px; }
.sceneid .count { color: #633; }
.menu { position: relative; display: flex; height: 13px; }
.menu select { flex: 1; width: 100%; appearance: none; padding-left: 3px; color: #fff; font-weight: normal; text-shadow: 0 0 1px #fff8; }
.menu select option { color: #000; }
.menu .arr { position: absolute; right: 3px; top: 2px; pointer-events: none; }
.engine { width: 74px; margin-left: 11px; }
.stats { margin-left: 14px; width: 214px; white-space: nowrap; }
.light { border: 1px solid #6d5b60; border-radius: 3px; background: #fde6e6; }
.full { width: 14px; height: 13px; }

.main { flex: 1; min-height: 0; display: flex; }
.left { flex: 1; min-width: 0; display: flex; flex-direction: column; border-right: 1px solid #4a4245; }
.canvas { position: relative; flex: 1; min-height: 0; overflow: hidden; background: repeating-linear-gradient(90deg, #0000001a 0 1px, #0000 1px 56px), repeating-linear-gradient(#0000001a 0 1px, #0000 1px 56px), repeating-linear-gradient(90deg, #0000001c 0 1px, #0000 1px 14px), repeating-linear-gradient(#0000001c 0 1px, #0000 1px 14px), #393939; }
.backdrop { position: absolute; width: 171px; height: 170px; background: #000; }
.links { position: absolute; left: 0; top: 0; width: 100%; height: 100%; }
.sizetag { position: absolute; line-height: 8px; color: #1d1b1b; }
.node { position: absolute; display: flex; flex-direction: column; border: 1px solid #d9bfc2; border-radius: 5px 5px 0 5px; background: #efcdd0; box-shadow: 0 2px 6px #000b; }
.nhead { flex: none; height: 14px; display: flex; align-items: center; gap: 1px; padding: 0 1px 0 4px; border-radius: 4px 4px 0 0; white-space: nowrap; }
.nhead span { flex: 1; margin-left: 3px; }
.nhead .i8 { width: 8px; height: 8px; }
.grey { background: #bfa8ab; }
.tan { background: #ecd4b8; }
.mauve { background: #c9b0b8; }
.tri { width: 0; height: 0; flex: none; border: 3px solid transparent; border-top: 6px solid #493c30; border-bottom: 0; }
.tri.pale { border-top-color: #fff3f3; }
.nrow { position: relative; flex: none; height: 12px; display: flex; align-items: center; }
.out { justify-content: flex-end; padding-right: 5px; }
.in { padding-left: 6px; gap: 4px; }
.sock { position: absolute; top: 3px; width: 6px; height: 6px; border-radius: 50%; border: 1px solid #3a3436; }
.sock.l { left: -4px; }
.sock.r { right: -4px; }
.yellow { background: #f4ee22; }
.white { background: #fff3f3; }
.blue { background: #6a6ae0; }
.rl { width: 88px; height: 151px; padding-bottom: 2px; }
.outs { height: 59px; display: flex; flex-direction: column; }
.outs .nrow { flex: 1; height: auto; }
.nid { margin: 0 6px 1px; }
.nid .dark { width: 18px; }
.nlayer { display: flex; justify-content: space-between; margin: 0 5px; }
.nlayer .menu { width: 59px; }
.nlayer .light { width: 13px; height: 13px; }
.dot { width: 71px; height: 53px; }
.vec { height: 10px; width: 58px; margin-left: 6px; }
.vec .arr { top: 0; }
.mix { width: 64px; height: 114px; padding-bottom: 1px; border-color: #e6d3d8; background: linear-gradient(#efcdd0 39px, #a6a5ca 39px); }
.mixrow { display: flex; margin: 0 6px 2px 4px; }
.mixrow .menu { flex: 1; height: 12px; border-radius: 3px 0 0 3px; }
.mixrow .menu .arr { top: 1px; }
.swbtn { width: 12px; height: 12px; background: #f2eef4; }
.colour { width: 24px; height: 9px; border: 1px solid #333; border-radius: 4px; background: #fff; margin-left: -2px; }
.comp { width: 48px; height: 73px; padding-bottom: 2px; }
.comp .in { padding-left: 7px; }
.pill { width: 35px; height: 10px; margin-left: 4px; border: 1px solid #4a3e42; border-radius: 5px; background: #fde6e8; }
.pointer { position: absolute; width: 10px; height: 14px; }
.vscroll { position: absolute; right: 1px; top: 2px; bottom: 14px; width: 9px; border-radius: 5px; background: #fbd9db; border: 1px solid #fff0f0; }
.vscroll .i8 { margin: 2px 0 0 -2px; }
.hscroll { position: absolute; left: 4px; right: 14px; bottom: 2px; height: 9px; border-radius: 5px; background: #fbdcdd; border: 1px solid #fff0f0; }

.nodebar { flex: none; height: 19px; display: flex; align-items: center; padding: 1px 6px 0; border-top: 1px solid #2a2426; background: #fad5d6; border-bottom: 1px solid #6a5c5d; }
.nodemenus { width: 106px; justify-content: space-between; margin: 0 0 0 7px; padding-right: 9px; }
.seg { display: flex; height: 13px; }
.seg button { width: 14px; border-radius: 0; border-left-width: 0; }
.seg button:first-child { border-left-width: 1px; border-radius: 3px 0 0 3px; }
.seg button:last-child { border-radius: 0 3px 3px 0; }
.seg button.on { background: #5b94e8; }
.nodebar .seg button { width: 13px; }
.nodebar .seg button:first-child { width: 14px; }
.nodebar .seg button .i12 { width: 10px; height: 10px; }
.chk { display: flex; align-items: center; gap: 4px; white-space: nowrap; }
input[type=checkbox] { appearance: none; flex: none; position: relative; width: 9px; height: 9px; border: 1px solid #3a3033; border-radius: 2px; background: linear-gradient(#3a3737, #625d5e); }
input[type=checkbox]:checked::after { content: ""; position: absolute; left: 2px; top: -2px; width: 3px; height: 7px; border: solid #fff; border-width: 0 2px 2px 0; transform: rotate(40deg); }
.chk input:checked + span { color: #fff2f2; }
.dim span { color: #9a8386; }
.dim input[type=checkbox] { background: #c9abae; border-color: #a88d90; }
.c1 { margin-left: 5px; width: 62px; }
.c2 { width: 67px; }
.c3 { width: 55px; }
.c4 { margin-left: 6px; }
.timeline { flex: none; width: 100%; height: 42px; }

.right { flex: none; width: 210px; display: flex; flex-direction: column; background: #f8d4d5; border-left: 1px solid #efd0d4; }
.outliner { flex: none; height: 119px; margin-right: 3px; display: flex; flex-direction: column; border-bottom: 1px solid #907c80; background: linear-gradient(90deg, #0000 166px, #e5c0c2 166px 167px, #0000 167px 178px, #e5c0c2 178px 179px, #0000 179px 190px, #e5c0c2 190px 191px, #0000 191px), repeating-linear-gradient(#fbd9d9 0 12px, #f8d3d3 12px 25px); }
.ohead, .phead { flex: none; height: 18px; display: flex; align-items: center; padding-left: 5px; background: #d3bee0; }
.ohead .coll { margin-left: 5px; }
.omenus { gap: 9px; margin-left: 6px; width: 58px; }
.scenes { flex: 1; }
.search { width: 23px; height: 13px; display: flex; align-items: center; margin-left: 4px; border: 1px solid #6d5b60; border-right: 0; border-radius: 3px 0 0 3px; background: #fdeaea; }
.search input { width: 8px; }
.tree { height: 63px; display: flex; flex-direction: column; }
.tree li { display: flex; align-items: center; flex: 1; min-height: 0; }
.tree li.root { margin-right: 40px; padding-left: 1px; gap: 3px; background: linear-gradient(90deg, #e2d9ef, #c6d4f5); }
.tree li.root span { margin-left: -2px; color: #1d2c60; }
.kid { padding-left: 13px; gap: 2px; }
.kid.deep { padding-left: 16px; gap: 0; }
.bar { margin: 0 4px; }
.flags { margin-left: auto; display: flex; gap: 2px; padding-right: 8px; }

.props { flex: 1; min-height: 0; display: flex; flex-direction: column; }
.phead { height: 21px; padding-bottom: 1px; border-top: 1px solid #e5d5e5; background: linear-gradient(90deg, #f2d0d8, #c9c0e6 42%, #d3bee0 60%); }
.tabs { margin-left: 5px; height: 15px; }
.tabs button { width: 16px; }
.phead .grip { margin-left: auto; align-self: flex-start; width: 7px; height: 7px; }
.pbody { flex: 1; min-height: 0; display: flex; overflow: hidden; }
.pcontent { flex: 1; min-width: 0; padding: 0 6px 0 3px; overflow: hidden; }
.crumb { height: 25px; display: flex; align-items: center; gap: 5px; padding-left: 2px; }
.crumb span { margin-left: -5px; }
.sect { border-top: 1px solid #a78a8e; padding: 0 0 5px 2px; }
.sect h2 { height: 15px; display: flex; align-items: center; gap: 3px; font-size: 8px; line-height: 12px; }
.sect h2 .tri { border-width: 7px 4px 0; border-top-color: #1a1214; }
.sect h2 .grip { margin-left: auto; width: 10px; height: 10px; opacity: .6; }
.two { display: grid; grid-template-columns: 1fr 1fr; column-gap: 5px; padding-top: 4px; }
.wide { height: 14px; padding: 0 1px; }
.wide span { flex: 1; text-align: center; }
.disp { display: flex; align-items: center; justify-content: space-between; padding: 3px 0 0 3px; }
.disp .menu { width: 124px; height: 14px; }
.listrow { display: flex; gap: 5px; padding-top: 5px; }
.list { flex: 1; height: 36px; padding: 5px 3px; border: 1px solid #6d5b60; border-radius: 2px; background: #fad8d9; }
.item { display: flex; align-items: center; height: 12px; padding: 0 4px 0 1px; background: #5a92ea; color: #182f5c; }
.item span { flex: 1; }
.stack { width: 14px; height: 27px; border: 1px solid #6d5b60; border-radius: 3px; background: #fde6e6; }
.stack button { width: 12px; height: 12px; }
.stack button + button { height: 13px; border-top: 1px solid #6d5b60; }
.namerow { display: flex; align-items: center; padding: 3px 0 0 3px; }
.namerow label { width: 56px; }
.field { flex: 1; height: 14px; padding-left: 3px; border: 1px solid #6d5b60; border-radius: 3px; background: #fde3e4; }
.namerow .light { width: 14px; height: 14px; margin-left: 5px; }
.masks { display: grid; grid-template-columns: minmax(0, 1fr) minmax(0, 1fr); column-gap: 5px; padding-top: 4px; }
.lab { height: 12px; line-height: 11px; padding-left: 3px; white-space: nowrap; }
.grids { display: grid; grid-template-columns: 1fr 1fr; gap: 5px; }
.lgrid { display: grid; grid-template-columns: repeat(5, 1fr); height: 21px; border: 1px solid #544649; border-radius: 3px; overflow: hidden; background: #6e5c60; gap: 1px; }
.lgrid i { background: #fcdfe0; }
.mint i { background: #f8e6dc; }
.mint i:nth-child(-n+5) { background: #e6f5d2; }
.mint i.sel, .dark2 i { background: #b39a9d !important; }
.mask { margin-top: 2px; height: 15px; line-height: 14px; }
.pick { display: flex; align-items: center; padding-left: 3px; height: 15px; }
.pick label { width: 30px; }
.picker { flex: 1; min-width: 0; height: 14px; display: flex; align-items: center; padding: 0 3px 0 1px; border: 1px solid #6d5b60; border-radius: 3px; background: #fde3e4; }
.picker input { flex: 1; width: 100%; height: 8px; }
.picker .lav { background: #e4dcf8; }
.light1 { margin-top: 15px; }
.inc { margin-top: 11px; }
.include { display: grid; grid-template-columns: 64px 65px 1fr; height: 44px; margin: 4px 0 0 2px; }
.pas { margin-top: 10px; }
.passes { display: grid; grid-template-columns: 1fr 1fr; column-gap: 5px; height: 131px; margin-top: 2px; padding-left: 2px; }
.pcol { display: grid; grid-template-rows: repeat(9, minmax(0, 1fr)); }
.prow { display: flex; align-items: center; justify-content: space-between; }
.prow .light { width: 14px; height: 14px; }
.preset { display: flex; height: 13px; margin-top: 6px; border: 1px solid #6d5b60; border-radius: 3px; background: #fde6e6; }
.preset .menu { flex: 1; height: 11px; border: 0; border-radius: 2px 0 0 2px; }
.preset .menu .arr { top: 1px; }
.preset button { width: 14px; border-left: 1px solid #8d7a80; }
.pscroll { flex: none; width: 9px; padding: 4px 1px 0 0; background: linear-gradient(#f8d4d5 8px, #a39496 8px); }
.thumb { height: 330px; border: 1px solid #6d5b60; border-radius: 4px; background: #fbdcdd; }
</style>
